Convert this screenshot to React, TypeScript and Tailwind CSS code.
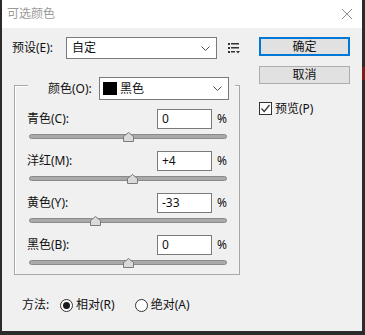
const rows = [
  { label: "青色(C):", value: 0, text: "0" },
  { label: "洋红(M):", value: 4, text: "+4" },
  { label: "黄色(Y):", value: -33, text: "-33" },
  { label: "黑色(B):", value: 0, text: "0" },
];

function Chevron() {
  return (
    <svg width="9" height="5" viewBox="0 0 9 5">
      <path d="M0.5 0.5 L4.5 4.5 L8.5 0.5" fill="none" stroke="#4d4d4d" strokeWidth="1" />
    </svg>
  );
}

function SliderRow({ label, value, text }: { label: string; value: number; text: string }) {
  return (
    <div className="h-[42px] pl-[12px]">
      <div className="flex h-[20px] items-center">
        <span className="w-[130px]">{label}</span>
        <div className="flex h-[20px] w-[55px] items-center border border-[#7a7a7a] bg-white pl-[4px]">{text}</div>
        <span className="ml-[5px]">%</span>
      </div>
      <div className="relative h-[22px]">
        <div className="absolute left-[2px] top-[5px] h-[5px] w-[198px] rounded-full border border-[#8a8a8a] bg-[#a9a9a9]" />
        <svg
          className="absolute top-[3px]"
          style={{ left: 96 + value }}
          width="11"
          height="10"
          viewBox="0 0 11 10"
        >
          <path d="M0.5 9.5 V4.5 L5.5 0.5 L10.5 4.5 V9.5 Z" fill="#dadada" stroke="#7a7a7a" strokeWidth="1" />
        </svg>
      </div>
    </div>
  );
}

function Radio({ checked, label }: { checked?: boolean; label: string }) {
  return (
    <div className="flex items-center">
      <span className="flex h-[13px] w-[13px] items-center justify-center rounded-full border border-[#333] bg-white">
        {checked && <span className="h-[7px] w-[7px] rounded-full bg-[#1a1a1a]" />}
      </span>
      <span className="ml-[3px]">{label}</span>
    </div>
  );
}

export default function App() {
  return (
    <div className="flex h-[335px] w-[365px] bg-[#2b2b2b] font-['Noto_Sans','Noto_Sans_CJK_SC',sans-serif] text-[12px] leading-none text-[#111]">
      <div className="ml-[2px] flex h-[331px] w-[360px] flex-col bg-[#f0f0f0]">
        <div className="flex h-[28px] items-center justify-between bg-white pl-[5px] pr-[10px]">
          <span className="text-[12px] text-[#9a9a9a]">可选颜色</span>
          <svg width="10" height="10" viewBox="0 0 10 10">
            <path d="M0 0 L10 10 M10 0 L0 10" stroke="#8f8f8f" strokeWidth="1" />
          </svg>
        </div>

        <div className="flex">
          <div className="w-[257px]">
            <div className="mt-[9px] flex h-[22px] items-center pl-[10px]">
              <span className="w-[54px]">预设(E):</span>
              <div className="flex h-[22px] w-[151px] items-center justify-between border border-[#7a7a7a] bg-white pl-[5px] pr-[6px]">
                <span>自定</span>
                <Chevron />
              </div>
              <svg className="ml-[11px]" width="12" height="11" viewBox="0 0 12 11">
                <rect x="0" y="0" width="2" height="2" fill="#333" />
                <rect x="3" y="0" width="8" height="1.5" fill="#333" />
                <rect x="0" y="4" width="2" height="2" fill="#333" />
                <rect x="3" y="4" width="8" height="1.5" fill="#333" />
                <rect x="0" y="8" width="2" height="2" fill="#333" />
                <rect x="3" y="8" width="4" height="1.5" fill="#333" />
                <path d="M8 8 L12 8 L10 10.5 Z" fill="#333" />
              </svg>
            </div>

            <div className="ml-[12px] mt-[26px] h-[190px] w-[226px] border border-[#a8a8a8] shadow-[inset_1px_1px_0_#ffffff]">
              <div className="ml-[13px] -mt-[9px] flex h-[23px] w-[207px] items-center bg-[#f0f0f0] pl-[20px]">
                <span className="w-[51px]">颜色(O):</span>
                <div className="flex h-[23px] w-[130px] items-center border border-[#7a7a7a] bg-white pl-[3px] pr-[6px]">
                  <span className="h-[13px] w-[14px] bg-black" />
                  <span className="ml-[3px] flex-1">黑色</span>
                  <Chevron />
                </div>
              </div>
              <div className="mt-[9px]">
                {rows.map((r) => (
                  <SliderRow key={r.label} {...r} />
                ))}
              </div>
            </div>

            <div className="mt-[20px] flex h-[20px] items-center pl-[20px]">
              <span className="w-[38px]">方法:</span>
              <Radio checked label="相对(R)" />
              <span className="w-[20px]" />
              <Radio label="绝对(A)" />
            </div>
          </div>

          <div className="flex flex-col pt-[9px]">
            <div className="flex h-[19px] w-[91px] items-center justify-center border-2 border-[#0078d7] bg-[#e1e1e1]">确定</div>
            <div className="mt-[10px] flex h-[18px] w-[91px] items-center justify-center border border-[#adadad] bg-[#e1e1e1]">取消</div>
            <div className="mt-[18px] flex items-center">
              <span className="flex h-[13px] w-[13px] items-center justify-center border border-[#333] bg-white">
                <svg width="11" height="11" viewBox="0 0 11 11">
                  <path d="M1.5 5.5 L4.2 8.5 L9.5 2" fill="none" stroke="#333" strokeWidth="1.2" />
                </svg>
              </span>
              <span className="ml-[3px]">预览(P)</span>
            </div>
          </div>
        </div>
      </div>
      <div className="flex w-[3px] flex-col">
        <div className="mt-[67px] h-[13px] bg-[#7a1e1e]" />
      </div>
    </div>
  );
}
